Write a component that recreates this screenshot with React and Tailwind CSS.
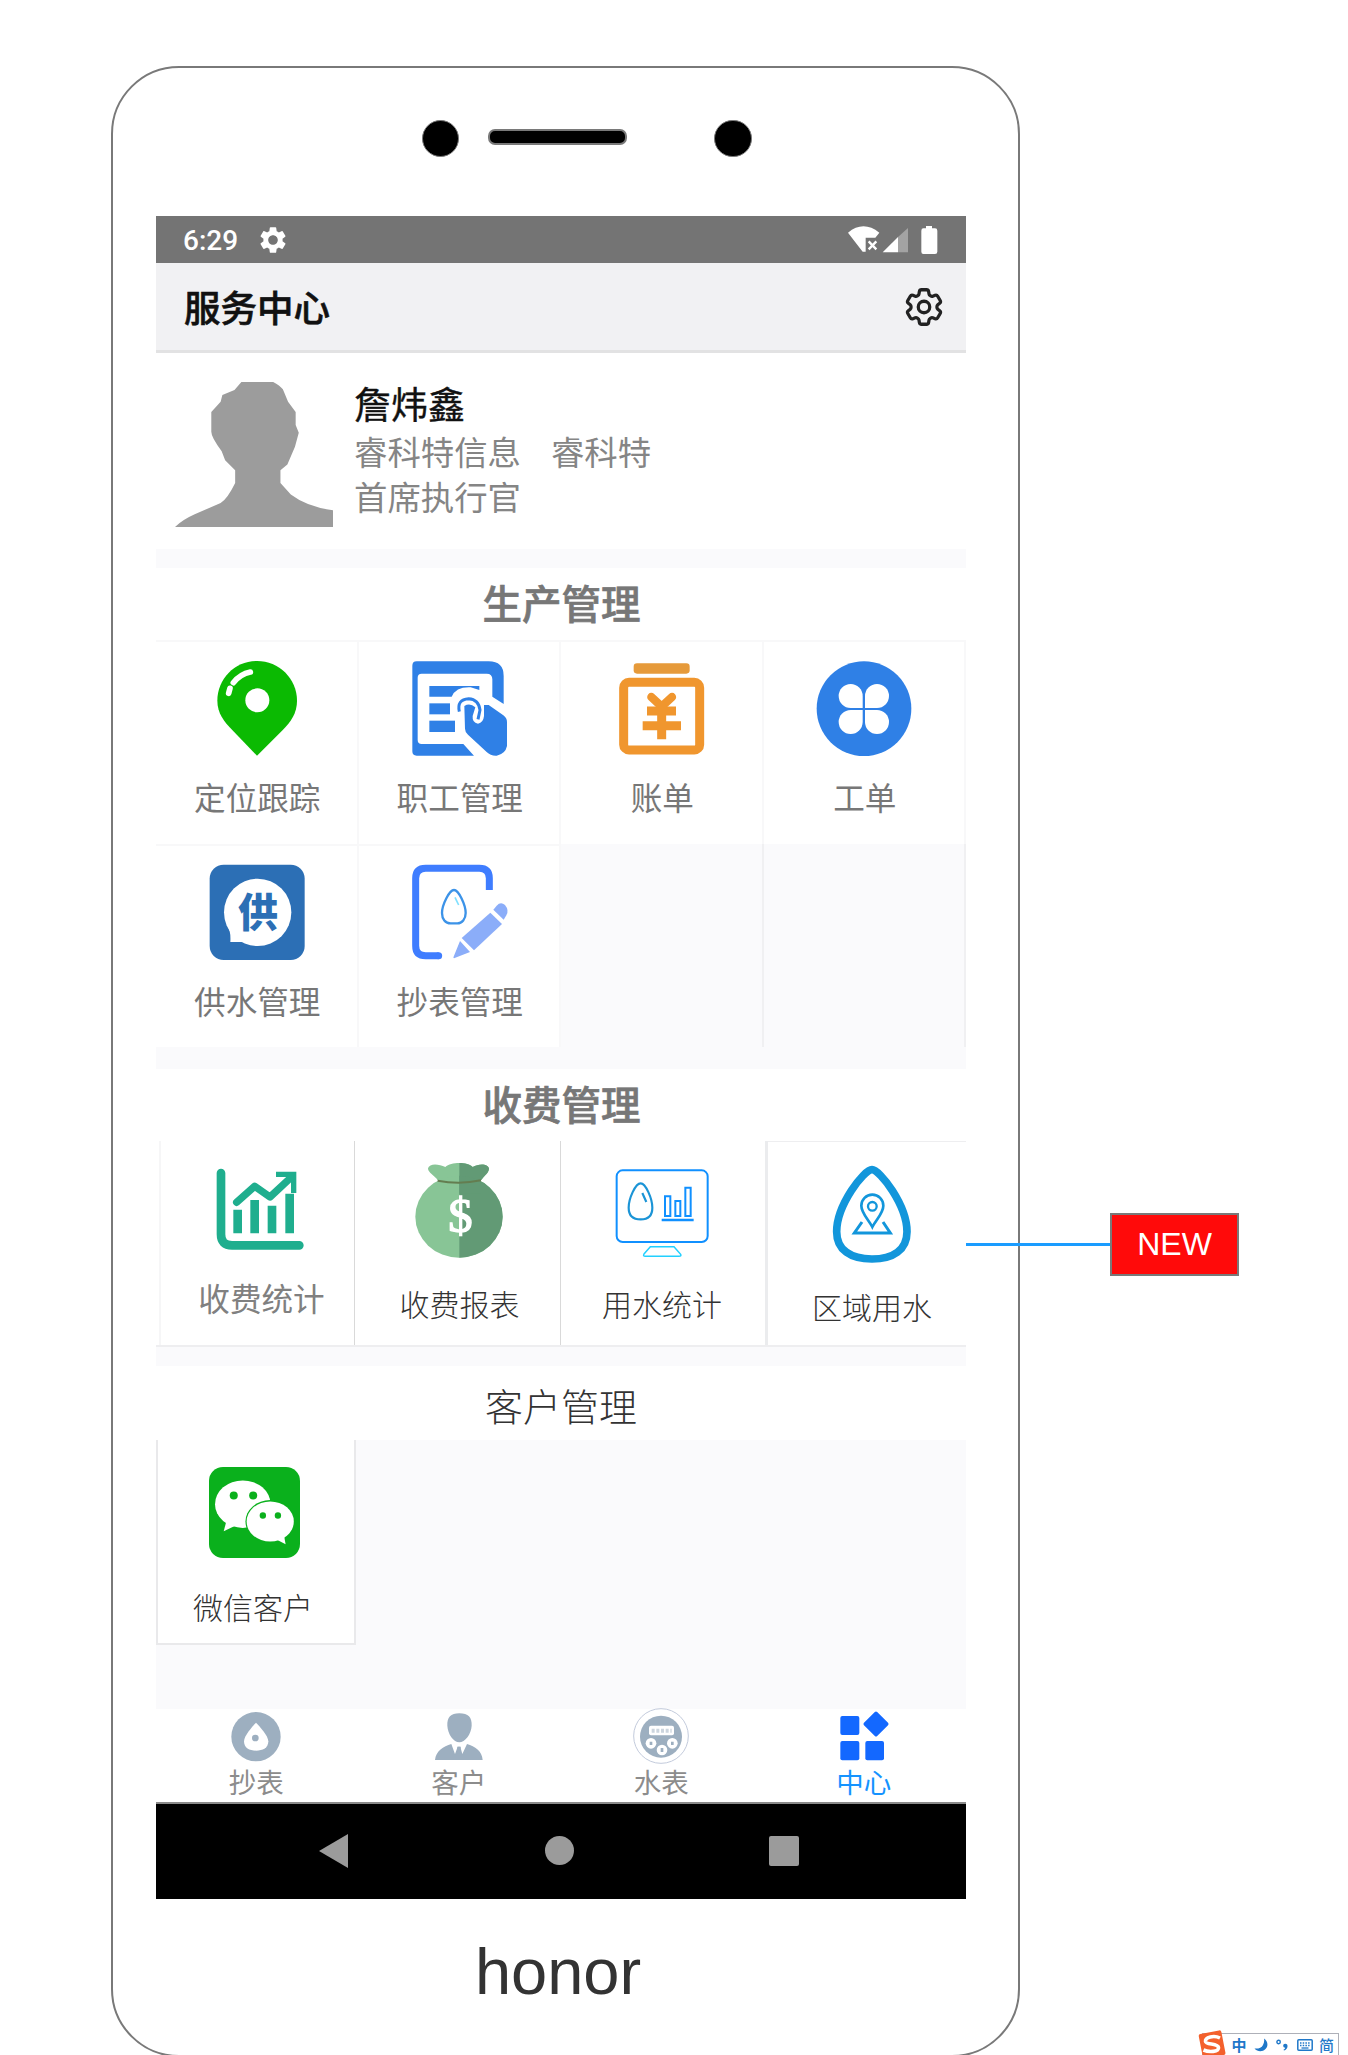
import React from "react";
import { HiOutlineCog6Tooth } from "react-icons/hi2";
import { MdSettings } from "react-icons/md";

const cjk = "font-['Noto_Sans_CJK_SC',sans-serif]";

function Art({ box, className = "w-24 h-24", children }) {
  return (
    <svg viewBox={box} className={`${className} shrink-0 overflow-visible`} fill="none">
      {children}
    </svg>
  );
}

const TrackIcon = () => (
  <Art box="176 90 288 288">
    <path d="M320 93C254 93 201 146 201 212C201 250 222 275 245 299L320 377L398 299C421 275 440 250 440 212C440 146 386 93 320 93Z" fill="#0bba02" />
    <circle cx="321" cy="211" r="36" fill="#fff" />
    <path d="M249 158Q270 132 300 126M235 190L239 175" stroke="#fff" strokeWidth="17" strokeLinecap="round" />
  </Art>
);

const StaffIcon = () => (
  <Art box="786 90 288 288">
    <g fill="#2f80e6">
      <path d="M800 94H1016Q1061 94 1061 138V222L1027 200V148Q1027 131 1010 131H815Q803 131 803 143V330Q803 342 815 342H940L972 377H800Q787 377 787 364V107Q787 94 800 94Z" />
      <path d="M838 168H988V180L962 172Q918 170 905 200H838Z" />
      <path d="M838 220H900V253H838Z" />
      <path d="M838 272H915V306H838Z" />
      <path d="M943 228Q960 218 976 232L968 258Q966 278 984 281Q1000 278 1002 258V225H1016L1060 256Q1071 264 1071 276V348Q1066 372 1040 377Q1022 378 1010 366L954 314Q945 306 945 296Z" />
    </g>
    <path d="M928 245Q920 208 956 206Q986 208 990 240L984 268" stroke="#2f80e6" strokeWidth="9" />
  </Art>
);

const BillIcon = () => (
  <Art box="163 90 288 288">
    <rect x="222" y="100" width="168" height="31" rx="10" fill="#e69a3a" />
    <g stroke="#f0962e">
      <rect x="192" y="157" width="228" height="203" rx="16" strokeWidth="27" />
      <path d="M275 201L306 230L337 201" strokeWidth="25" strokeLinecap="round" />
      <path d="M262 243H349M249 287H364M306 228V328" strokeWidth="27" />
    </g>
  </Art>
);

const OrderIcon = () => (
  <Art box="770 90 288 288">
    <circle cx="911" cy="236" r="142" fill="#2f80e6" />
    <g fill="#fff">
      <path d="M907 234H871A36 36 0 1 1 907 198Z" />
      <path d="M914 234H950A36 36 0 1 0 914 198Z" />
      <path d="M907 240H871A36 36 0 1 0 907 276Z" />
      <path d="M914 240H950A36 36 0 1 1 914 276Z" />
    </g>
  </Art>
);

const SupplyIcon = () => (
  <Art box="176 703 288 288">
    <rect x="178" y="705" width="285" height="286" rx="42" fill="#2c6fb5" />
    <circle cx="322" cy="848" r="101" fill="#fff" />
    <path d="M232 890Q242 905 240 937H272Q290 938 322 949L300 860Z" fill="#fff" />
    <text x="323" y="891" textAnchor="middle" fontSize="120" fontWeight="900" fill="#2c6fb5" className={cjk}>供</text>
  </Art>
);

const MeterEditIcon = () => (
  <Art box="786 703 288 288">
    <path d="M1018 781V746Q1018 716 988 716H827Q797 716 797 746V948Q797 978 827 978H866" stroke="#3f7dff" strokeWidth="21" />
    <circle cx="866" cy="978" r="10.500" fill="#3f7dff" />
    <path d="M912 781C926 781 947 826 947 850C947 868 936 881 922 881H902C886 881 876 868 876 850C876 826 898 781 912 781Z" stroke="#3c93e8" strokeWidth="7" />
    <path d="M915 803L926 826" stroke="#7fe0ff" strokeWidth="5" />
    <g fill="#8badf9">
      <path d="M1021 849L1056 883L972 962L935 925Z" />
      <path d="M1030 840L1040 828Q1052 815 1065 826Q1078 842 1069 857L1061 870Z" />
      <path d="M930 934L960 967L912 986Q908 984 912 978Z" />
    </g>
  </Art>
);

const FeeStatsIcon = () => (
  <Art box="190 335 288 288">
    <g stroke="#1fae8e">
      <path d="M217 368V552Q217 585 250 585H452" strokeWidth="26" strokeLinecap="round" />
      <path d="M267 478V549M318 449V549M370 466V549M423 430V549" strokeWidth="26" />
      <path d="M264 456L318 408L364 440L424 384" strokeWidth="22" strokeLinecap="round" strokeLinejoin="round" />
      <path d="M382 372H435V428" strokeWidth="16" />
      <path d="M410 372H436V398Z" fill="#1fae8e" strokeWidth="4" />
    </g>
  </Art>
);

const bagTop = "M866 391C855 374 836 368 836 354C840 338 868 340 888 350C905 334 955 334 970 350C986 340 1015 338 1019 354C1019 368 1007 374 995 390Z";
const MoneyBagIcon = () => (
  <Art box="785 335 288 288">
    <defs>
      <clipPath id="bagRight">
        <rect x="930" y="330" width="150" height="300" />
      </clipPath>
    </defs>
    <path d={bagTop} fill="#88c596" />
    <ellipse cx="929" cy="499" rx="131" ry="123" fill="#88c596" />
    <path d="M866 390H995V430H866Z" fill="#88c596" />
    <g clipPath="url(#bagRight)" fill="#629a75">
      <path d={bagTop} />
      <ellipse cx="929" cy="499" rx="131" ry="123" />
      <path d="M866 390H995V430H866Z" />
    </g>
    <path d="M865 391Q930 404 995 390" stroke="#647d50" strokeWidth="6" />
    <text x="933" y="544" textAnchor="middle" fontSize="146" fill="#fff" stroke="#fff" strokeWidth="4" className="font-['Liberation_Serif',serif]">$</text>
  </Art>
);

const WaterStatsIcon = () => (
  <Art box="190 335 288 288">
    <g stroke="#1090ff" strokeWidth="6">
      <rect x="198" y="360" width="273" height="215" rx="18" />
      <path d="M343 438H359V497H343ZM374 452H389V497H374ZM404 412H420V497H404Z" />
      <path d="M333 509H429" strokeWidth="8" />
    </g>
    <path d="M270 399C285 399 305 445 305 472C305 499 288 507 270 507C250 507 234 499 234 472C234 445 254 399 270 399ZM275 428L287 455" stroke="#1b94d6" strokeWidth="6.500" />
    <path d="M299 589H370L390 612Q393 618 385 618H284Q276 618 280 611Z" stroke="#22d0ff" strokeWidth="4.500" />
  </Art>
);

const RegionIcon = () => (
  <Art box="823 345 288 294" className="w-24 h-[98px]">
    <g stroke="#1296db">
      <path d="M967 359C990 359 1072 465 1072 545C1072 600 1030 627 967 627C903 627 861 600 861 545C861 465 943 359 967 359Z" strokeWidth="23" />
      <path d="M968 531C958 510 935 490 935 467A33 33 0 0 1 1001 467C1001 490 978 510 968 531Z" strokeWidth="8" />
      <circle cx="968" cy="469" r="13" strokeWidth="7" />
      <path d="M937 516L914 549H1022L1000 516" strokeWidth="9" />
    </g>
  </Art>
);

const WechatIcon = () => (
  <Art box="178 322 272 272" className="w-[91px] h-[91px]">
    <rect x="178" y="322" width="272" height="272" rx="42" fill="#0ab01c" />
    <ellipse cx="279" cy="433" rx="83" ry="71" fill="#fff" />
    <path d="M231 480L222 514L258 497Z" fill="#fff" />
    <ellipse cx="361" cy="485" rx="74" ry="64" fill="#0ab01c" />
    <ellipse cx="361" cy="485" rx="70.500" ry="60" fill="#fff" />
    <path d="M402 525L407 553L378 538Z" fill="#fff" />
    <g fill="#0ab01c">
      <circle cx="252" cy="407" r="12" />
      <circle cx="310" cy="407" r="12" />
      <circle cx="339" cy="467" r="9.500" />
      <circle cx="384" cy="467" r="9.500" />
    </g>
  </Art>
);

const TabMeterRead = () => (
  <Art box="239 55 162 162" className="w-[54px] h-[54px]">
    <circle cx="320" cy="138" r="74" fill="#9dafc0" />
    <path d="M320 96C330 106 357 135 357 152C357 172 340 180 320 180C300 180 284 172 284 152C284 135 310 106 320 96Z" fill="#fff" />
    <circle cx="318" cy="142" r="10" fill="#9dafc0" />
  </Art>
);

const TabCustomer = () => (
  <Art box="846 55 162 162" className="w-[54px] h-[54px]">
    <g fill="#9dafc0">
      <path d="M928 68C955 68 966 80 965 105C964 130 945 155 928 155C911 155 893 130 892 105C891 80 902 68 928 68Z" />
      <path d="M904 160L915 190L923 168H931L937 190L951 160C975 168 996 180 998 208H855C858 180 880 168 904 160Z" />
      <path d="M922 168H932L930 188H923Z" />
    </g>
  </Art>
);

const TabWaterMeter = () => (
  <Art box="253 55 162 162" className="w-[54px] h-[54px]">
    <circle cx="334" cy="136" r="82" stroke="#c3cbdc" strokeWidth="3" />
    <circle cx="334" cy="138" r="63" fill="#9dafc0" />
    <g fill="#fff">
      <rect x="298" y="105" width="75" height="29" rx="6" />
      <circle cx="304" cy="158" r="16" />
      <circle cx="368" cy="158" r="16" />
      <circle cx="337" cy="178" r="16" />
    </g>
    <path d="M306 120H366" stroke="#ccd5de" strokeWidth="12" strokeDasharray="9 5" />
    <path d="M304 153V163M368 153V163M337 172V184" stroke="#9dafc0" strokeWidth="8" />
  </Art>
);

const TabCenter = () => (
  <Art box="862 55 162 162" className="w-[54px] h-[54px]">
    <g fill="#1368ff">
      <rect x="872" y="76" width="57" height="57" rx="6" />
      <rect x="872" y="151" width="57" height="58" rx="6" />
      <rect x="947" y="151" width="56" height="58" rx="6" />
      <rect x="951" y="72" width="56" height="56" rx="5" transform="rotate(45 979 100)" />
    </g>
  </Art>
);

function SectionTitle({ children }) {
  return (
    <h2 className="h-[72px] bg-white pl-px text-center text-[39.500px] leading-[68px] font-medium text-[#777] [-webkit-text-stroke:0.7px_#777]">{children}</h2>
  );
}

const Strip = ({ className }) => <div className={`bg-[#fafafc] ${className}`} />;

const production = [
  { label: "定位跟踪", Icon: TrackIcon },
  { label: "职工管理", Icon: StaffIcon },
  { label: "账单", Icon: BillIcon },
  { label: "工单", Icon: OrderIcon },
  { label: "供水管理", Icon: SupplyIcon },
  { label: "抄表管理", Icon: MeterEditIcon },
  null,
  null,
];

const tabs = [
  { label: "抄表", Icon: TabMeterRead },
  { label: "客户", Icon: TabCustomer },
  { label: "水表", Icon: TabWaterMeter },
  { label: "中心", Icon: TabCenter, active: true },
];

function StatusBar() {
  return (
    <div className="flex h-[47px] items-center bg-[#747474] pl-[27px] pr-7 text-white">
      <span className="mt-[2px] w-[58px] text-[28px] leading-none font-medium font-['Roboto',sans-serif]">6:29</span>
      <MdSettings className="ml-[16px] h-8 w-8" />
      <svg viewBox="864 520 270 90" className="ml-auto h-[30px] w-[90px]" fill="#fff">
        <path d="M864 543Q910 505 958 543L946 558H917V600H908Z" />
        <path d="M926 569L949 593M949 569L926 593" stroke="#fff" strokeWidth="7" />
        <path d="M968 602L1014 556V602Z" />
        <path d="M1014 556L1044 529V602H1014Z" fill="#a3a3a3" />
        <path d="M1098 523H1116V530H1125Q1132 530 1132 537V600Q1132 607 1125 607H1090Q1084 607 1084 600V537Q1084 530 1090 530H1098Z" />
      </svg>
    </div>
  );
}

function Profile() {
  return (
    <div className="flex h-[196px] bg-white pt-[29px] pl-[19px]">
      <svg viewBox="73 96 457 434" preserveAspectRatio="none" className="h-[145px] w-[158px]" fill="#9c9c9c">
        <path d="M265 96H357Q376 106 385 118L400 155L422 186V225L431 248L420 290L398 343L378 360V398L408 433Q455 470 530 480V530H73Q95 508 130 492L205 458Q225 445 247 398V360L218 330L208 303Q178 262 178 245V186L205 155L210 135L245 120Z" />
      </svg>
      <div className="ml-[21px] text-[33.400px] leading-[46px] text-[#858585]">
        <div className="h-[46px] text-[37px] leading-[42px] text-[#111] [-webkit-text-stroke:0.4px_#111]">詹炜鑫</div>
        <div className="flex h-[45px] gap-[30px]">
          <span>睿科特信息</span>
          <span>睿科特</span>
        </div>
        <div>首席执行官</div>
      </div>
    </div>
  );
}

function Screen() {
  return (
    <div className={`flex w-[810px] flex-col ${cjk}`}>
      <StatusBar />
      <header className="flex h-[90px] items-center justify-between border-b-3 border-[#e2e2e3] bg-[#f1f1f3] pl-[28px] pr-[19px]">
        <h1 className="text-[36.500px] leading-[44px] font-medium text-[#111] [-webkit-text-stroke:0.6px_#111]">服务中心</h1>
        <HiOutlineCog6Tooth className="h-[46px] w-[46px] text-[#222] [stroke-width:1.700]" />
      </header>
      <Profile />
      <Strip className="h-[19px]" />

      <SectionTitle>生产管理</SectionTitle>
      <div className="grid h-[407px] grid-cols-4 grid-rows-2">
        {production.map((item, i) =>
          item ? (
            <div key={i} className="flex flex-col items-center border-t-2 border-r-2 border-[#f8f8f9] bg-white pt-[18px] pl-[2px]">
              <item.Icon />
              <span className="mt-[17px] text-[31.600px] leading-[46px] text-[#777]">{item.label}</span>
            </div>
          ) : (
            <div key={i} className="border-r-2 border-[#f0f0f2] bg-[#fafafc]" />
          )
        )}
      </div>
      <Strip className="h-[22px]" />

      <SectionTitle>收费管理</SectionTitle>
      <div className="grid h-[206px] grid-cols-[199px_206px_207px_198px] border-b-2 border-[#eeeef0] bg-white">
        <div className="ml-[3px] flex flex-col items-center border-l-2 border-r border-l-[#f6f6f7] border-r-[#d9d9d9] pt-[21px] pl-[5px]">
          <FeeStatsIcon />
          <span className="mt-[16px] ml-[3px] text-[31.600px] leading-[46px] text-[#808080]">收费统计</span>
        </div>
        <div className="flex flex-col items-center border-r border-[#d9d9d9] pt-[21px] pl-[2px]">
          <MoneyBagIcon />
          <span className="mt-[23px] ml-[2px] text-[30px] leading-[44px] font-light text-[#333]">收费报表</span>
        </div>
        <div className="flex flex-col items-center border-r-3 border-[#ebecee] pt-[21px] pr-[2px]">
          <WaterStatsIcon />
          <span className="mt-[23px] text-[30px] leading-[44px] font-light text-[#333]">用水统计</span>
        </div>
        <div className="flex flex-col items-center border-t border-[#eeeef0] pt-[23px] pl-[10px]">
          <RegionIcon />
          <span className="mt-[21px] text-[30px] leading-[44px] font-light text-[#333]">区域用水</span>
        </div>
      </div>
      <Strip className="h-[19px]" />

      <h2 className="h-[74px] bg-white text-center text-[38px] leading-[78px] font-light text-[#333]">客户管理</h2>
      <div className="h-[269px] bg-[#fafafc]">
        <div className="flex h-[205px] w-[200px] flex-col items-center border-2 border-t-0 border-[#e9e9eb] bg-white pt-[27px] pr-1">
          <WechatIcon />
          <span className="mt-[26px] mr-[2px] text-[30px] leading-[44px] font-light text-[#333]">微信客户</span>
        </div>
      </div>

      <nav className="grid h-[93px] grid-cols-4 bg-white">
        {tabs.map(({ label, Icon, active }) => (
          <div key={label} className={`flex flex-col items-center pr-[2px] ${active ? "text-[#1593ff]" : "text-[#8c8c8c]"}`}>
            <Icon />
            <span className="text-[27.500px] leading-[37px]">{label}</span>
          </div>
        ))}
      </nav>
      <div className="flex h-[97px] items-center border-t-2 border-[#8a8a8a] bg-black pb-[2px]">
        <svg viewBox="0 0 30 34" className="ml-[163px] h-[34px] w-[30px]" fill="#9b9b9b">
          <path d="M0 17L29 0V34Z" />
        </svg>
        <div className="ml-[196px] h-[29px] w-[29px] rounded-full bg-[#9b9b9b]" />
        <div className="ml-[195px] h-[30px] w-[30px] rounded-[2px] bg-[#9b9b9b]" />
      </div>
    </div>
  );
}

function InputMethodBar() {
  return (
    <div className="absolute top-[2033px] left-[1202px] flex h-[22px] w-[137px] items-center border border-b-0 border-[#aeb0b8] bg-white pt-px pl-[26px] text-[#1f78c9]">
      <svg viewBox="0 0 28 28" className="absolute top-[-4px] left-[-5px] h-7 w-7">
        <rect x="2.500" y="2" width="23" height="25" rx="2" fill="#f4602c" transform="rotate(-11 14 14)" />
        <path d="M22 8C16 5 7 7 7.500 11.500C8 15 20 13 20.500 17.500C21 22 11 22.500 5.500 20" stroke="#fff" strokeWidth="3.600" fill="none" />
      </svg>
      <span className={`w-[20px] text-center text-[15px] leading-[18px] font-bold ${cjk}`}>中</span>
      <svg viewBox="0 0 14 14" className="ml-[5px] h-[14px] w-[14px]" fill="#1f78c9">
        <path d="M10 0.500C14 3 14.500 8 11.500 11C8.500 14 3.500 14 0.500 10.500C4 11 7.500 10 9 7C10 5 10.500 3 10 0.500Z" />
      </svg>
      <svg viewBox="0 0 12 12" className="ml-2 h-3 w-3">
        <circle cx="2.600" cy="3" r="1.700" strokeWidth="1.400" fill="none" stroke="#1f78c9" />
        <path d="M9.200 4.800C11 4.800 11.700 6 11.500 7.500C11.300 9.500 10 11 8 11.600L7.500 10.800C8.500 10.300 9 9.700 9.200 8.800C8 8.800 7.200 8 7.200 6.800C7.200 5.600 8 4.800 9.200 4.800Z" fill="#1f78c9" />
      </svg>
      <svg viewBox="0 0 16 12" className="ml-[9px] h-3 w-4" fill="none" stroke="#1f78c9">
        <rect x="0.800" y="0.800" width="14.400" height="10.400" rx="1" strokeWidth="1.500" />
        <path d="M3 4H13M3 6.500H13" strokeWidth="1.300" strokeDasharray="1.500 1.200" />
        <path d="M4.500 9H11.500" strokeWidth="1.300" />
      </svg>
      <span className={`ml-[6px] text-[15px] leading-[18px] font-medium ${cjk}`}>简</span>
    </div>
  );
}

export default function App() {
  return (
    <div className="relative h-[2055px] w-[1348px] overflow-hidden bg-white pt-[66px] pl-[111px]">
      <div className="h-[1991px] w-[909px] rounded-[68px] border-2 border-[#797979] bg-white pl-[43px]">
        <div className="flex h-[148px] items-start pt-[52px] pl-[266px]">
          <div className="h-[37px] w-[37px] rounded-full border border-[#797979] bg-black" />
          <div className="mt-[9px] ml-[29px] h-4 w-[139px] rounded-[7px] border-2 border-[#797979] bg-black" />
          <div className="ml-[87px] h-[37px] w-[38px] rounded-full border border-[#797979] bg-black" />
        </div>
        <Screen />
        <div className="mt-[33px] w-[804px] text-center text-[65px] leading-[80px] text-[#333] font-['Liberation_Sans',Arial,sans-serif]">honor</div>
      </div>

      <div className="absolute top-[1213px] left-[966px] flex items-center">
        <div className="h-[3px] w-[144px] bg-[#1a9cff]" />
        <div className="flex h-[63px] w-[129px] items-center justify-center border-2 border-[#797979] bg-[#ff0a0a] pb-[2px] text-[32px] leading-none text-white font-['Liberation_Sans',Arial,sans-serif]">NEW</div>
      </div>
      <InputMethodBar />
    </div>
  );
}
